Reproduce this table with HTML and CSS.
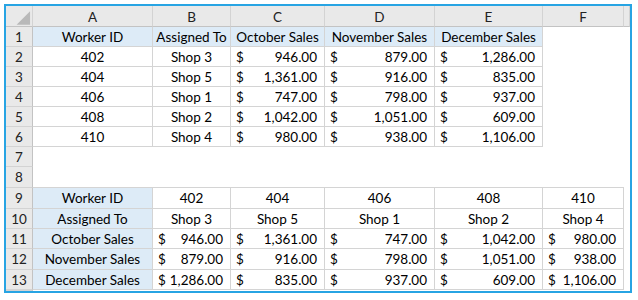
FILE: index.html
```html
<!DOCTYPE html>
<html>
<head>
<meta charset="utf-8">
<link rel="stylesheet" href="styles.css">
</head>
<body>
<div class="sheet">
  <div class="hd corner"><svg width="27" height="21" viewBox="0 0 27 21"><polygon points="25,5 25,19 11,19" fill="#b9b9b9"/></svg></div>
  <div class="hd">A</div><div class="hd">B</div><div class="hd">C</div><div class="hd">D</div><div class="hd">E</div><div class="hd">F</div><div class="hd"></div>

  <div class="rn">1</div>
  <div class="c t blue">Worker ID</div><div class="c t blue">Assigned To</div><div class="c t blue">October Sales</div><div class="c t blue">November Sales</div><div class="c t blue">December Sales</div><div class="c"></div><div class="c"></div>

  <div class="rn">2</div>
  <div class="c t">402</div><div class="c t">Shop 3</div><div class="c t m"><span>$</span><span>946.00</span></div><div class="c t m"><span>$</span><span>879.00</span></div><div class="c t m"><span>$</span><span>1,286.00</span></div><div class="c"></div><div class="c"></div>

  <div class="rn">3</div>
  <div class="c t">404</div><div class="c t">Shop 5</div><div class="c t m"><span>$</span><span>1,361.00</span></div><div class="c t m"><span>$</span><span>916.00</span></div><div class="c t m"><span>$</span><span>835.00</span></div><div class="c"></div><div class="c"></div>

  <div class="rn">4</div>
  <div class="c t">406</div><div class="c t">Shop 1</div><div class="c t m"><span>$</span><span>747.00</span></div><div class="c t m"><span>$</span><span>798.00</span></div><div class="c t m"><span>$</span><span>937.00</span></div><div class="c"></div><div class="c"></div>

  <div class="rn">5</div>
  <div class="c t">408</div><div class="c t">Shop 2</div><div class="c t m"><span>$</span><span>1,042.00</span></div><div class="c t m"><span>$</span><span>1,051.00</span></div><div class="c t m"><span>$</span><span>609.00</span></div><div class="c"></div><div class="c"></div>

  <div class="rn">6</div>
  <div class="c t">410</div><div class="c t">Shop 4</div><div class="c t m"><span>$</span><span>980.00</span></div><div class="c t m"><span>$</span><span>938.00</span></div><div class="c t m"><span>$</span><span>1,106.00</span></div><div class="c"></div><div class="c"></div>

  <div class="rn">7</div>
  <div class="c"></div><div class="c"></div><div class="c"></div><div class="c"></div><div class="c"></div><div class="c"></div><div class="c"></div>

  <div class="rn">8</div>
  <div class="c bb"></div><div class="c bb"></div><div class="c bb"></div><div class="c bb"></div><div class="c bb"></div><div class="c bb"></div><div class="c"></div>

  <div class="rn">9</div>
  <div class="c t blue">Worker ID</div><div class="c t">402</div><div class="c t">404</div><div class="c t">406</div><div class="c t">408</div><div class="c t">410</div><div class="c"></div>

  <div class="rn">10</div>
  <div class="c t blue">Assigned To</div><div class="c t">Shop 3</div><div class="c t">Shop 5</div><div class="c t">Shop 1</div><div class="c t">Shop 2</div><div class="c t">Shop 4</div><div class="c"></div>

  <div class="rn">11</div>
  <div class="c t blue">October Sales</div><div class="c t m"><span>$</span><span>946.00</span></div><div class="c t m"><span>$</span><span>1,361.00</span></div><div class="c t m"><span>$</span><span>747.00</span></div><div class="c t m"><span>$</span><span>1,042.00</span></div><div class="c t m"><span>$</span><span>980.00</span></div><div class="c"></div>

  <div class="rn">12</div>
  <div class="c t blue">November Sales</div><div class="c t m"><span>$</span><span>879.00</span></div><div class="c t m"><span>$</span><span>916.00</span></div><div class="c t m"><span>$</span><span>798.00</span></div><div class="c t m"><span>$</span><span>1,051.00</span></div><div class="c t m"><span>$</span><span>938.00</span></div><div class="c"></div>

  <div class="rn">13</div>
  <div class="c t blue">December Sales</div><div class="c t m"><span>$</span><span>1,286.00</span></div><div class="c t m"><span>$</span><span>835.00</span></div><div class="c t m"><span>$</span><span>937.00</span></div><div class="c t m"><span>$</span><span>609.00</span></div><div class="c t m"><span>$</span><span>1,106.00</span></div><div class="c"></div>

  <div class="rn"></div>
  <div class="c"></div><div class="c"></div><div class="c"></div><div class="c"></div><div class="c"></div><div class="c"></div><div class="c"></div>
</div>
</body>
</html>
```
FILE: styles.css
```css
html, body {
  margin: 0;
  padding: 0;
  background: #ffffff;
}

body {
  padding: 4px 0 0 4px;
}

.sheet {
  width: 624px;
  height: 285px;
  border: 2px solid #27a4e3;
  overflow: hidden;
  display: grid;
  grid-template-columns: 27px 120px 78px 94px 110px 108px 81px 6px;
  grid-template-rows: 21px 20px 20px 20px 20px 20px 20px 20px 21px 21px 20px 20px 21px 20px 1px;
  font-family: Lato, "Liberation Sans", sans-serif;
  font-size: 13.5px;
  color: #000;
  background: #fff;
}

.sheet > div {
  box-sizing: border-box;
  display: flex;
  align-items: center;
  justify-content: center;
  white-space: nowrap;
  overflow: hidden;
  min-width: 0;
}

.hd {
  background: #e9e9e9;
  border-right: 1px solid #d3d3d3;
  border-bottom: 1px solid #c3c3c3;
  color: #222;
  padding-top: 1px;
}

.corner {
  padding: 0;
  align-items: stretch;
}

.rn {
  background: #e9e9e9;
  border-right: 1px solid #c3c3c3;
  border-bottom: 1px solid #d3d3d3;
  color: #222;
}

.c {
  background: #fff;
}

.t {
  border-right: 1px solid #d4d4d4;
  border-bottom: 1px solid #d4d4d4;
}

.bb {
  border-bottom: 1px solid #d4d4d4;
}

.blue {
  background: #ddebf7;
}

.sheet > .m {
  justify-content: space-between;
  padding: 0 7px 0 5px;
}
```
